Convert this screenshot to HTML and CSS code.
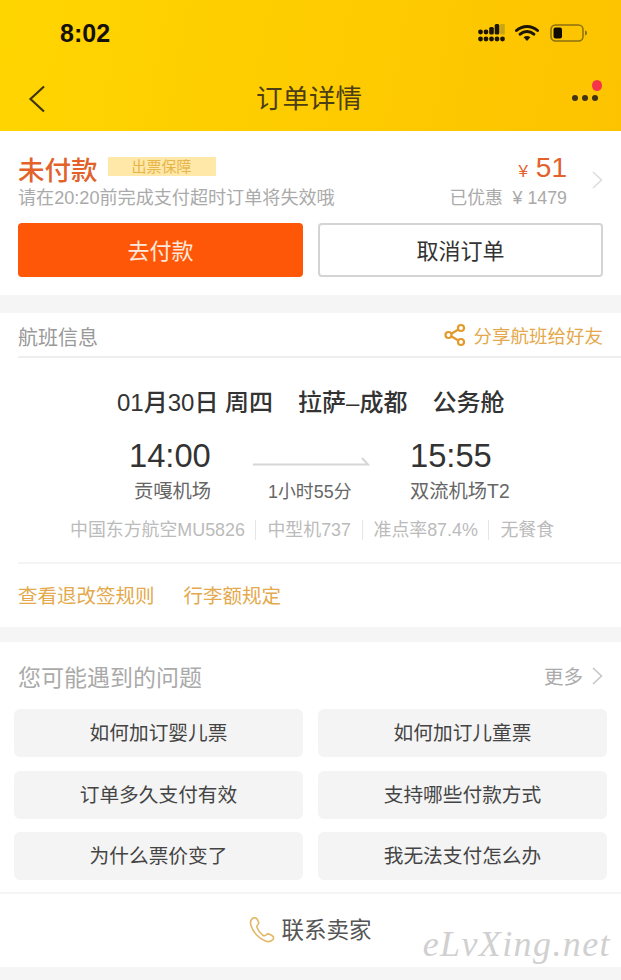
FILE: index.html
```html
<!DOCTYPE html>
<html>
<head>
    <meta charset="utf-8">
    <title>订单详情</title>
    <link rel="stylesheet" href="styles.css">
</head>
<body>
    <div class="page">
        <header class="header">
            <div class="status-bar">
                <span class="clock">8:02</span>
                <div class="status-icons">
                    <svg class="icon-signal" width="27" height="18" viewBox="0 0 27 18">
                        <g fill="#1d1606">
                            <circle cx="2.5" cy="8" r="2.4"/><circle cx="8" cy="8" r="2.4"/><circle cx="2.5" cy="15" r="2.4"/><circle cx="8" cy="15" r="2.4"/><circle cx="13.5" cy="15" r="2.4"/><circle cx="19" cy="15" r="2.4"/><circle cx="24.5" cy="15" r="2.4"/>
                            <rect x="11.2" y="3" width="4.6" height="7.5" rx="1.5"/>
                            <rect x="16.7" y="0" width="4.6" height="10.5" rx="1.5"/>
                        </g>
                        <rect x="22.2" y="0" width="4.6" height="10.5" rx="1" fill="#c9a414"/>
                    </svg>
                    <svg class="icon-wifi" width="24" height="18" viewBox="0 0 24 18">
                        <path d="M1.5 6.5C7.5 1 16.5 1 22.5 6.5M5.2 10.2C9.2 6.6 14.8 6.6 18.8 10.2" fill="none" stroke="#1d1606" stroke-width="3" stroke-linecap="round"/>
                        <path d="M8.6 13.2C10.6 11.6 13.4 11.6 15.4 13.2L12 17Z" fill="#1d1606"/>
                    </svg>
                    <svg width="38" height="18" viewBox="0 0 38 18">
                        <rect x="1" y="1" width="32" height="16" rx="4.5" fill="none" stroke="#8a7010" stroke-width="1.5"/>
                        <rect x="3.5" y="3.5" width="8.5" height="11" rx="2" fill="#100c02"/>
                        <path d="M35 6.5C36.6 7 37 8 37 9S36.6 11 35 11.5Z" fill="#8a7010"/>
                    </svg>
                </div>
            </div>
            <nav class="nav-bar">
                <svg class="nav-back" width="18" height="28" viewBox="0 0 18 28">
                    <path d="M16 1.5L2.5 14L16 26.5" fill="none" stroke="#3f3413" stroke-width="2.2"/>
                </svg>
                <h1 class="nav-title">订单详情</h1>
                <div class="nav-more">
                    <i></i><i></i><i></i>
                    <span class="red-dot"></span>
                </div>
            </nav>
        </header>

        <section class="card order">
            <div class="order-top">
                <div class="order-left">
                    <div class="order-state">
                        <span class="state-text">未付款</span>
                        <span class="badge">出票保障</span>
                    </div>
                    <p class="order-tip">请在20:20前完成支付超时订单将失效哦</p>
                </div>
                <div class="order-price">
                    <div class="price"><small>¥</small>51</div>
                    <p class="saved">已优惠 &nbsp;¥ 1479</p>
                </div>
                <svg class="chevron order-chevron" width="11" height="18" viewBox="0 0 11 18">
                    <path d="M1 1L9.5 9L1 17" fill="none" stroke="#dcdcdc" stroke-width="1.5"/>
                </svg>
            </div>
            <div class="order-buttons">
                <button class="btn btn-pay">去付款</button>
                <button class="btn btn-cancel">取消订单</button>
            </div>
        </section>

        <section class="card flight">
            <div class="flight-head">
                <span class="flight-label">航班信息</span>
                <span class="share">
                    <svg width="22" height="24" viewBox="0 0 22 24">
                        <path d="M17 5L5 12L17 19" fill="none" stroke="#e39a2c" stroke-width="2.2"/>
                        <circle cx="17" cy="5" r="3" fill="#fff" stroke="#e39a2c" stroke-width="2.2"/>
                        <circle cx="4.5" cy="12" r="3" fill="#fff" stroke="#e39a2c" stroke-width="2.2"/>
                        <circle cx="17" cy="19" r="3" fill="#fff" stroke="#e39a2c" stroke-width="2.2"/>
                    </svg>
                    分享航班给好友
                </span>
            </div>
            <div class="route">
                <span>01月30日 周四</span>
                <span>拉萨–成都</span>
                <span>公务舱</span>
            </div>
            <div class="times">
                <div class="stop stop-from">
                    <div class="time">14:00</div>
                    <div class="airport">贡嘎机场</div>
                </div>
                <div class="duration">
                    <svg width="118" height="12" viewBox="0 0 118 12">
                        <path d="M1 9.5H116L110 3" fill="none" stroke="#d6d6d6" stroke-width="2"/>
                    </svg>
                    <div class="duration-text">1小时55分</div>
                </div>
                <div class="stop stop-to">
                    <div class="time">15:55</div>
                    <div class="airport">双流机场T2</div>
                </div>
            </div>
            <div class="flight-meta">
                <span>中国东方航空MU5826</span>
                <span>中型机737</span>
                <span>准点率87.4%</span>
                <span>无餐食</span>
            </div>
            <div class="flight-links">
                <a>查看退改签规则</a>
                <a>行李额规定</a>
            </div>
        </section>

        <section class="card faq">
            <div class="faq-head">
                <span class="faq-title">您可能遇到的问题</span>
                <span class="faq-more">更多
                    <svg width="11" height="18" viewBox="0 0 11 18">
                        <path d="M1 1L9.5 9L1 17" fill="none" stroke="#c4c4c4" stroke-width="1.5"/>
                    </svg>
                </span>
            </div>
            <div class="faq-grid">
                <div class="faq-item">如何加订婴儿票</div>
                <div class="faq-item">如何加订儿童票</div>
                <div class="faq-item">订单多久支付有效</div>
                <div class="faq-item">支持哪些付款方式</div>
                <div class="faq-item">为什么票价变了</div>
                <div class="faq-item">我无法支付怎么办</div>
            </div>
            <div class="contact">
                <svg width="26" height="26" viewBox="0 0 26 26">
                    <path d="M3.5 1.5C1.5 3 1 5.5 2 8.5C4 15 9.5 21.5 16.5 24C19.5 25 22.5 24.5 24 22.5C25 21 24.5 19.5 23 18.5L20.5 17.2C19 16.5 18 17 17 18C16 19 15 19 13.5 18C11 16 9 13 8 10.5C7.5 9 8 8.3 9 7.5C10 6.5 10 5.5 9.3 4.3L8 2C7 .8 5 .5 3.5 1.5Z" fill="none" stroke="#e3b765" stroke-width="1.6"/>
                </svg>
                联系卖家
            </div>
            <div class="watermark">eLvXing.net</div>
        </section>
    </div>
</body>
</html>
```

FILE: styles.css
```css
* {
    box-sizing: border-box;
}

body {
    margin: 0;
    background-color: #f5f5f6;
    color: #333;
    font-family: "Liberation Sans", "Noto Sans CJK SC", sans-serif;
}

p, h1 {
    margin: 0;
    font-weight: normal;
}

.page {
    width: 621px;
    height: 980px;
    overflow: hidden;
}

.card {
    background-color: #fff;
}

/* header */
.header {
    height: 131px;
    background: linear-gradient(100deg, #ffd500, #fdc300);
}

.status-bar {
    height: 66px;
    padding: 0 33px 0 60px;
    display: flex;
    justify-content: space-between;
    align-items: center;
}

.clock {
    font-size: 25px;
    font-weight: bold;
    color: #15100a;
}

.status-icons {
    display: flex;
    align-items: center;
    gap: 10px;
}

.icon-wifi {
    margin-right: 1px;
}

.nav-bar {
    height: 65px;
    padding: 0 23px 0 28px;
    display: flex;
    justify-content: space-between;
    align-items: center;
}

.nav-title {
    margin-bottom: 4px;
    font-size: 26.5px;
    color: #4b3d14;
}

.nav-more {
    position: relative;
    width: 26px;
    display: flex;
    justify-content: space-between;
    margin-bottom: 2px;
}

.nav-more i {
    width: 6px;
    height: 6px;
    border-radius: 50%;
    background-color: #3f3413;
}

.red-dot {
    position: absolute;
    top: -15px;
    right: -4px;
    width: 10px;
    height: 11px;
    border-radius: 50%;
    background-color: #f5334a;
}

/* order */
.order {
    height: 164px;
    padding: 0 18px;
}

.order-top {
    height: 92px;
    display: flex;
    align-items: flex-start;
}

.order-left {
    flex: 1;
    padding-top: 23px;
}

.order-state {
    display: flex;
    align-items: flex-start;
    gap: 10px;
    height: 32px;
}

.state-text {
    margin-top: 2px;
    font-size: 26.5px;
    font-weight: 500;
    line-height: 31px;
    color: #e2622a;
}

.badge {
    width: 108px;
    height: 19px;
    margin-top: 3px;
    background-color: #ffe8a8;
    color: #e8b54a;
    font-size: 15px;
    line-height: 20px;
    text-align: center;
}

.order-tip {
    font-size: 18.1px;
    line-height: 24px;
    color: #aaa;
}

.order-price {
    padding-top: 20px;
    text-align: right;
}

.price {
    font-size: 28px;
    line-height: 34px;
    color: #e2622a;
}

.price small {
    font-size: 17px;
    margin-right: 8px;
}

.saved {
    margin-top: -3px;
    font-size: 17.8px;
    line-height: 24px;
    color: #aaa;
}

.order-chevron {
    margin: 40px 0 0 25px;
}

.order-buttons {
    display: grid;
    grid-template-columns: 285px 285px;
    gap: 15px;
}

.btn {
    height: 54px;
    border-radius: 4px;
    font-family: inherit;
    font-size: 22px;
    padding: 0 0 3px;
}

.btn-pay {
    border: none;
    background-color: #ff5708;
    color: #ffe9dd;
}

.btn-cancel {
    border: 2px solid #d4d4d4;
    background-color: #fff;
    color: #333;
}

/* flight */
.flight {
    height: 314px;
    margin-top: 18px;
    padding-left: 18px;
}

.flight-head {
    height: 45px;
    padding-right: 18px;
    border-bottom: 2px solid #eee;
    display: flex;
    justify-content: space-between;
    align-items: center;
}

.flight-label {
    margin-top: 4px;
    font-size: 20px;
    color: #999;
}

.share {
    display: flex;
    align-items: center;
    gap: 7px;
    font-size: 18.5px;
    color: #e3a94c;
}

.route {
    height: 43px;
    margin-top: 21px;
    padding-left: 99px;
    display: flex;
    gap: 25px;
    align-items: center;
    font-size: 24px;
    font-weight: 500;
    color: #333;
}

.times {
    display: flex;
    margin-top: 14px;
    padding-left: 111px;
}

.stop {
    width: 100px;
}

.time {
    font-size: 32.7px;
    line-height: 40px;
    color: #333;
}

.airport {
    margin-top: 1px;
    font-size: 19.3px;
    line-height: 30px;
    color: #666;
    white-space: nowrap;
}

.stop-from .airport {
    margin-left: 5px;
}

.duration {
    width: 181px;
    padding: 17px 0 0 23px;
}

.duration-text {
    margin: 6px 0 0 16px;
    font-size: 17.9px;
    line-height: 30px;
    color: #666;
}

.flight-meta {
    height: 30px;
    margin-top: 8px;
    padding-left: 52px;
    display: flex;
    align-items: center;
    font-size: 17.9px;
    color: #bbb;
}

.flight-meta span {
    padding-right: 10.5px;
    margin-right: 11px;
    border-right: 1px solid #e6e6e6;
    line-height: 20px;
}

.flight-meta span:last-child {
    border: none;
}

.flight-links {
    margin-top: 17px;
    height: 63px;
    border-top: 2px solid #f4f4f4;
    display: flex;
    gap: 29px;
    align-items: center;
    font-size: 19.5px;
    color: #e3a94c;
}

/* faq */
.faq {
    position: relative;
    height: 325px;
    margin-top: 15px;
}

.faq-head {
    height: 67px;
    padding: 0 18px;
    display: flex;
    justify-content: space-between;
    align-items: center;
}

.faq-title {
    font-size: 23px;
    color: #aaa;
}

.faq-more {
    display: flex;
    align-items: center;
    gap: 9px;
    font-size: 19.5px;
    color: #aaa;
}

.faq-grid {
    padding: 0 14px;
    display: grid;
    grid-template-columns: 289px 289px;
    grid-auto-rows: 48px;
    column-gap: 15px;
    row-gap: 13.5px;
}

.faq-item {
    padding-bottom: 3px;
    background-color: #f4f4f4;
    border-radius: 6px;
    display: flex;
    justify-content: center;
    align-items: center;
    font-size: 19.7px;
    color: #444;
}

.contact {
    height: 75px;
    margin-top: 12px;
    padding-bottom: 5px;
    border-top: 2px solid #f5f5f6;
    display: flex;
    justify-content: center;
    align-items: center;
    gap: 6px;
    font-size: 22.5px;
    color: #555;
}

.contact svg {
    margin-top: 3px;
}

.watermark {
    position: absolute;
    right: 10px;
    bottom: 2px;
    font-family: "Liberation Serif", serif;
    font-style: italic;
    font-size: 36px;
    letter-spacing: 1.4px;
    color: #d0d0d0;
}
```
